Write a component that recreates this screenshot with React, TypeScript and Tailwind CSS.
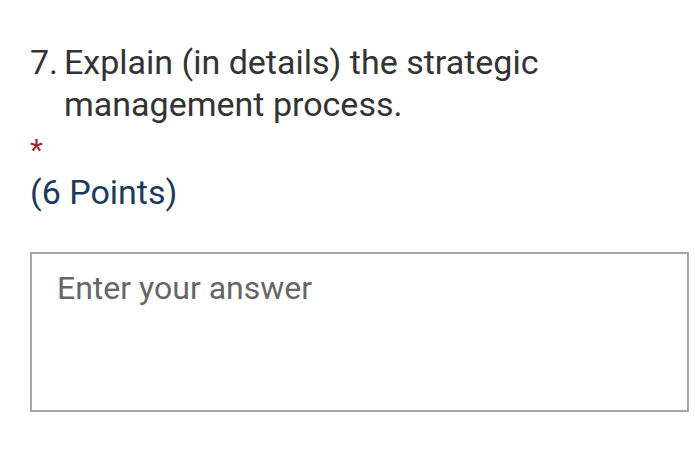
export default function App() {
  return (
    <div className="w-[695px] h-[459px] bg-white font-['Roboto',sans-serif] pl-[30px] pr-[6px] pt-[41px]">
      <div className="flex text-[34px] leading-[42px] text-[#333333]">
        <span className="w-[34px] shrink-0">7.</span>
        <span>Explain (in details) the strategic management process.</span>
      </div>
      <div className="text-[#a4262c] text-[30px] leading-[28px] mt-[11px] h-[28px]">*</div>
      <div className="text-[#1b3a5c] text-[34px] leading-[40px] mt-[8px]">(6 Points)</div>
      <div className="mt-[40px] h-[160px] border-2 border-[#a6a6a6] px-[25px] pt-[16px] text-[32px] leading-[36px] text-[#666666]">
        Enter your answer
      </div>
    </div>
  );
}
